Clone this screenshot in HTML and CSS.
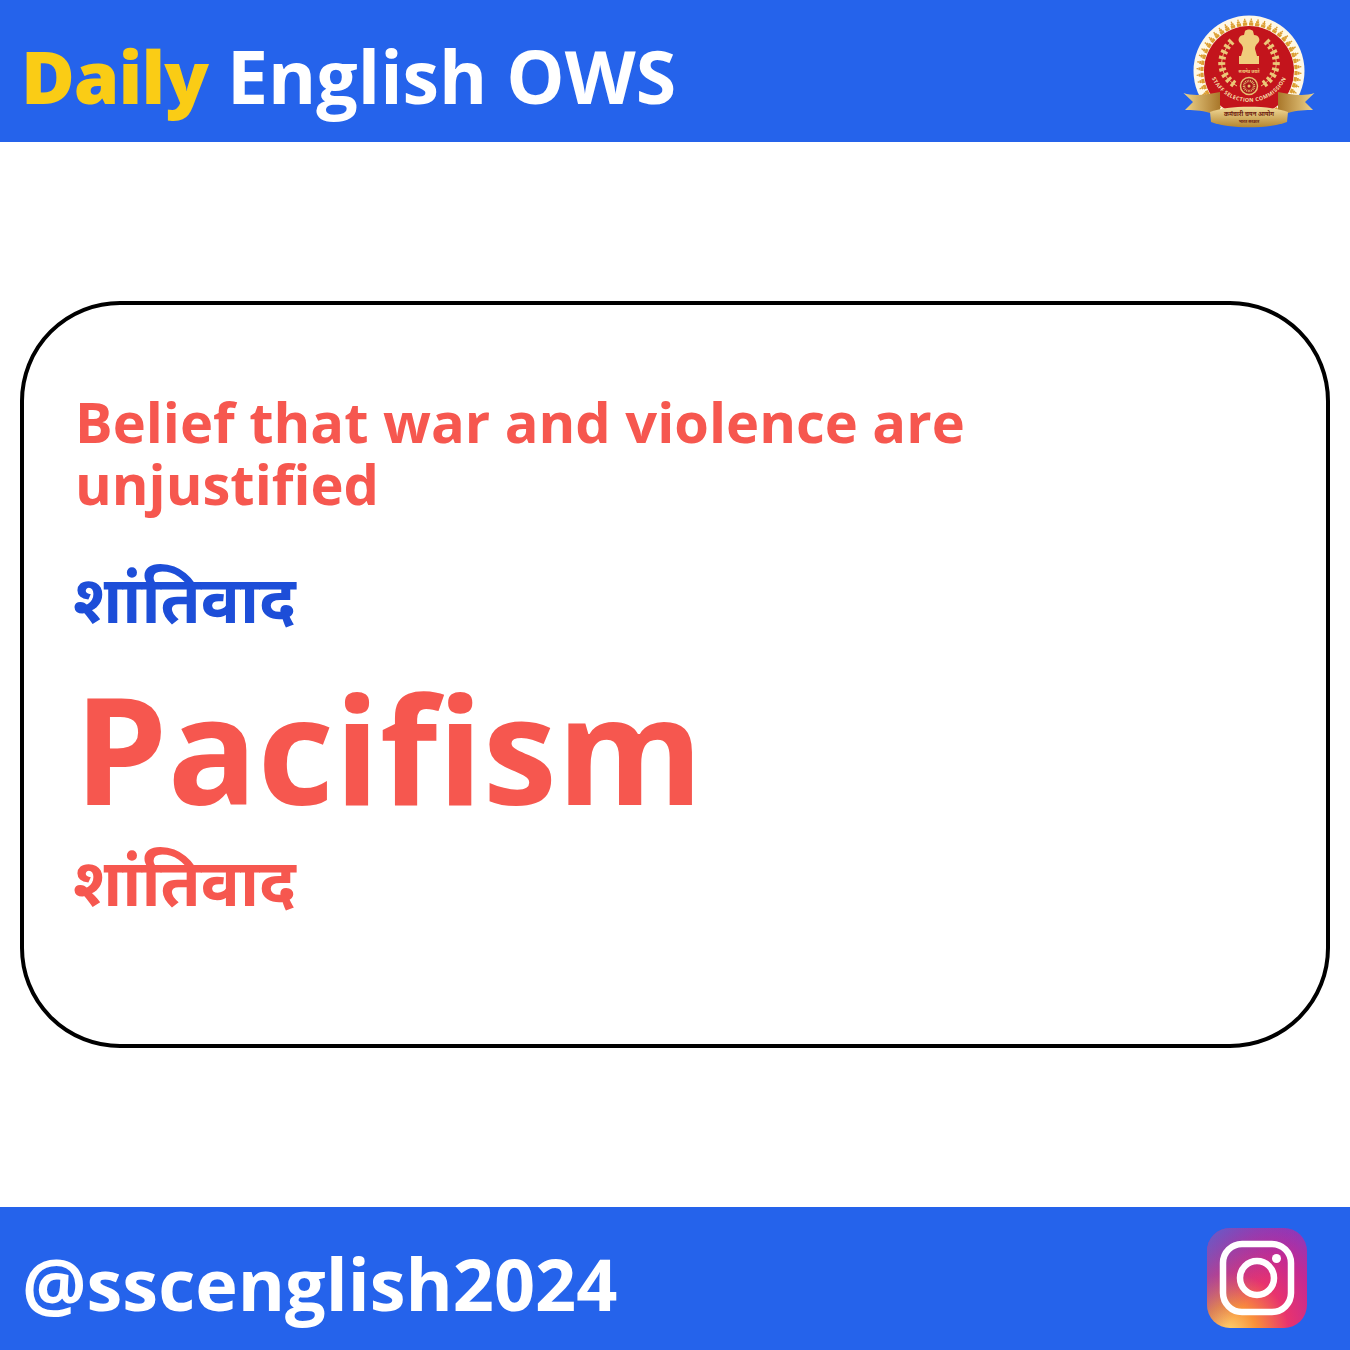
FILE: index.html
```html
<!DOCTYPE html>
<html lang="en">

<head>
<meta charset="UTF-8">
<meta name="viewport" content="width=device-width, initial-scale=1.0">
<title>Daily English OWS</title>
<link rel="stylesheet" href="styles.css">
</head>

<body>

<div class="page">
    <header class="bar bar-top">
        <h1 class="title"><span class="title-accent">Daily</span> English OWS</h1>
        <svg class="emblem" viewBox="0 0 132 114" aria-hidden="true">
            <defs>
                <linearGradient id="gold" x1="0" y1="0" x2="0" y2="1">
                    <stop offset="0" stop-color="#f3dc9c"/>
                    <stop offset="1" stop-color="#b5862f"/>
                </linearGradient>
                <linearGradient id="tail" x1="0" y1="0" x2="1" y2="0">
                    <stop offset="0" stop-color="#eed48c"/>
                    <stop offset="1" stop-color="#a9772a"/>
                </linearGradient>
                <linearGradient id="tailRight" x1="1" y1="0" x2="0" y2="0">
                    <stop offset="0" stop-color="#eed48c"/>
                    <stop offset="1" stop-color="#a9772a"/>
                </linearGradient>
                <path id="arcText" d="M25 47 A41 41 0 0 0 107 47"/>
            </defs>
            <circle cx="66" cy="57" r="55.500" fill="#fff8e6"/>
            <g fill="none" stroke="#dc9e32">
                <circle cx="66" cy="57" r="47" stroke-width="3" pathLength="48" stroke-dasharray="0.7 0.3"/>
                <circle cx="66" cy="57" r="49.500" stroke-width="2" pathLength="48" stroke-dasharray="0.45 0.55" stroke-dashoffset="-0.12"/>
                <circle cx="66" cy="57" r="51.500" stroke-width="2" pathLength="48" stroke-dasharray="0.2 0.8" stroke-dashoffset="-0.25"/>
            </g>
            <circle cx="66" cy="57" r="45" fill="#c3141c"/>
            <g fill="none" stroke="#ecc878">
                <path d="M49 27 C36 40 33 60 54 72" stroke-width="1"/>
                <path d="M83 27 C96 40 99 60 78 72" stroke-width="1"/>
                <path d="M49 27 C36 40 33 60 54 72" stroke-width="7" pathLength="9" stroke-dasharray="0.5 0.5"/>
                <path d="M83 27 C96 40 99 60 78 72" stroke-width="7" pathLength="9" stroke-dasharray="0.5 0.5"/>
            </g>
            <path d="M62 17 C64 15 68 15 70 17 L71 21 C76 21 78 26 75 29 C73 31 72 32 72 35 L74 42 H76 V50 H56 V42 H58 L60 35 C60 32 59 31 57 29 C54 26 56 21 61 21 Z" fill="#f0cd7c"/>
            <text class="emblem-motto" x="66" y="59" text-anchor="middle">सत्यमेव जयते</text>
            <circle cx="66" cy="72" r="8.500" fill="#a8141a" stroke="#e8c272" stroke-width="1.500"/>
            <circle cx="66" cy="72" r="5" fill="none" stroke="#e8c272" stroke-width="2.500" stroke-dasharray="0.8 0.8"/>
            <circle cx="66" cy="72" r="1.500" fill="#e8c272"/>
            <text class="emblem-arc"><textPath href="#arcText" startOffset="50%" text-anchor="middle">STAFF SELECTION COMMISSION</textPath></text>
            <path d="M0.500 79 C12 83 26 80 37 78 L37 96 L27 99 C18 96 9 96 2 96 L10 88 Z" fill="url(#tail)"/>
            <path d="M131.500 79 C120 83 106 80 95 78 L95 96 L105 99 C114 96 123 96 130 96 L122 88 Z" fill="url(#tailRight)"/>
            <path d="M27 98 C45 91 87 91 105 98 L104 108 C86 115 46 115 28 108 Z" fill="url(#gold)"/>
            <text class="emblem-ribbon" x="66" y="102" text-anchor="middle">कर्मचारी चयन आयोग</text>
            <text class="emblem-small" x="66" y="109" text-anchor="middle">भारत सरकार</text>
        </svg>
    </header>

    <main class="content">
        <section class="card">
            <p class="meaning">Belief that war and violence are unjustified</p>
            <p class="hindi hindi-blue">शांतिवाद</p>
            <p class="word">Pacifism</p>
            <p class="hindi hindi-red">शांतिवाद</p>
        </section>
    </main>

    <footer class="bar bar-bottom">
        <div class="handle">@sscenglish2024</div>
        <svg class="insta" viewBox="0 0 100 100" aria-hidden="true">
            <defs>
                <radialGradient id="igBase" cx="0.22" cy="1.05" r="1.25">
                    <stop offset="0" stop-color="#fed773"/>
                    <stop offset="0.22" stop-color="#f9913a"/>
                    <stop offset="0.48" stop-color="#e8336e"/>
                    <stop offset="0.75" stop-color="#c32a93"/>
                    <stop offset="1" stop-color="#8d39bb"/>
                </radialGradient>
                <linearGradient id="igTop" x1="0" y1="0" x2="0.6" y2="0.5">
                    <stop offset="0" stop-color="#4a6fd6" stop-opacity="0.8"/>
                    <stop offset="1" stop-color="#7a3bc0" stop-opacity="0"/>
                </linearGradient>
            </defs>
            <rect width="100" height="100" rx="23" fill="url(#igBase)"/>
            <rect width="100" height="100" rx="23" fill="url(#igTop)"/>
            <rect x="16" y="16" width="68" height="68" rx="19" fill="none" stroke="#fff" stroke-width="6.5"/>
            <circle cx="50" cy="50" r="17" fill="none" stroke="#fff" stroke-width="6.5"/>
            <circle cx="69.500" cy="30.500" r="4.500" fill="#fff"/>
        </svg>
    </footer>
</div>

</body>

</html>
```

FILE: styles.css
```css
body {
    margin: 0;
    background-color: #ffffff;
    font-family: "Open Sans", "Noto Sans", "Noto Sans Devanagari", sans-serif;
    font-weight: 700;
}

.page {
    width: 1350px;
    height: 1350px;
    display: flex;
    flex-direction: column;
}

.bar {
    flex: none;
    background-color: #2563eb;
    color: #ffffff;
    display: flex;
    align-items: center;
    justify-content: space-between;
    padding: 0 35px 0 22px;
}

.bar-top {
    height: 142px;
}

.bar-bottom {
    height: 143px;
}

.title,
.handle {
    margin: 0;
    font-weight: 700;
    line-height: 1;
}

.title {
    font-size: 73.4px;
    padding-top: 12px;
    margin-left: -1px;
}

.handle {
    font-size: 72px;
    padding-top: 9px;
}

.title-accent {
    color: #facc15;
    font-weight: 800;
    letter-spacing: -1px;
}

.emblem {
    width: 132px;
    height: 114px;
}

.emblem-motto {
    font-size: 4px;
    fill: #f0cd7c;
}

.emblem-arc {
    font-size: 5.4px;
    letter-spacing: 0.35px;
    fill: #f5dfa8;
}

.emblem-ribbon {
    font-size: 6px;
    fill: #6d1d10;
}

.emblem-small {
    font-size: 4px;
    fill: #6d1d10;
}

.insta {
    width: 100px;
    height: 100px;
    margin: -2px 8px 0 0;
}

.content {
    flex: 1;
    padding: 159px 20px 0;
}

.card {
    box-sizing: border-box;
    height: 747px;
    border: 4px solid #000000;
    border-radius: 100px;
    padding: 85px 52px 0;
}

.meaning {
    width: 960px;
    margin: 0 0 0 -1px;
    font-size: 56px;
    line-height: 62px;
    color: #f6574f;
}

.hindi {
    font-size: 65px;
    line-height: 96px;
}

.hindi-blue {
    color: #1d4ed8;
    margin: 36px 0 0 -3px;
}

.hindi-red {
    color: #f6574f;
    margin: 0 0 0 -3px;
}

.word {
    font-size: 149px;
    line-height: 170px;
    margin: 17px 0 0 -2px;
    color: #f6574f;
}
```
